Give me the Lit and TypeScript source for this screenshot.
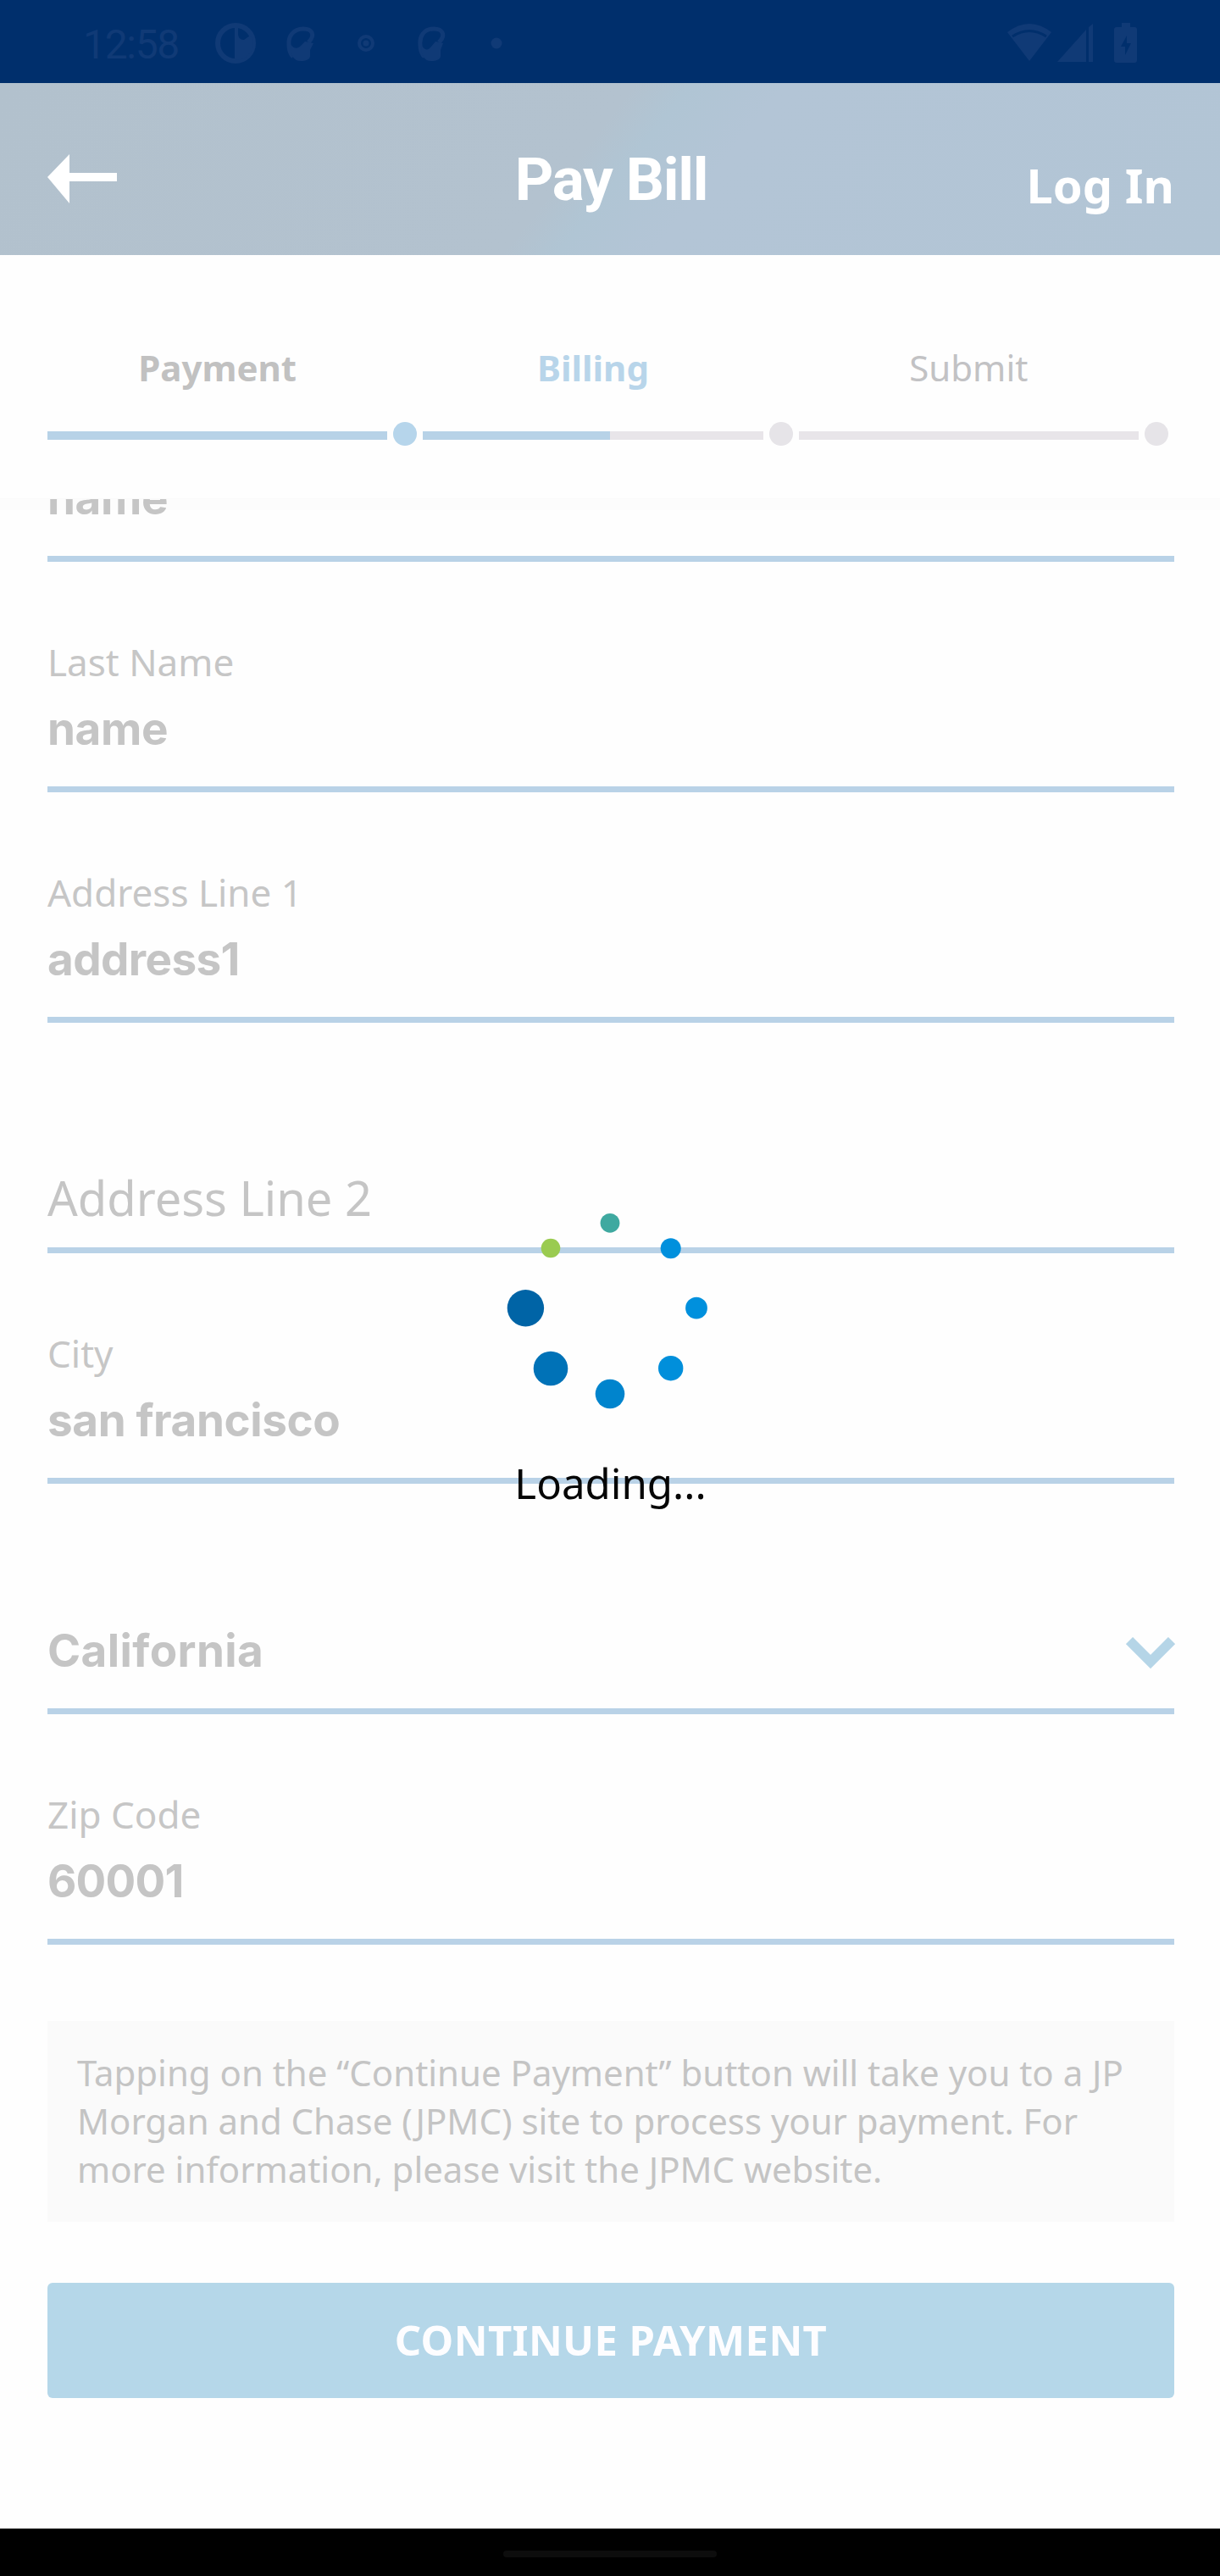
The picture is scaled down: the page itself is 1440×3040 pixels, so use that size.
import { LitElement, html, css, svg, nothing } from "lit";
import { customElement, property } from "lit/decorators.js";

interface Field {
  label?: string;
  value?: string;
  placeholder?: string;
  select?: boolean;
  kind: string;
}

const FIELDS: Field[] = [
  { value: "name", kind: "name" },
  { label: "Last Name", value: "name", kind: "name" },
  { label: "Address Line 1", value: "address1", kind: "address" },
  { placeholder: "Address Line 2", kind: "empty" },
  { label: "City", value: "san francisco", kind: "city" },
  { value: "California", select: true, kind: "state" },
  { label: "Zip Code", value: "60001", kind: "zip" },
];

// x, y, radius and colour of each spinner dot
const DOTS: [number, number, number, string][] = [
  [100.3, 21.3, 11.4, "#3fa9a0"],
  [172, 51.3, 12, "#0090dd"],
  [202.3, 121.7, 12.9, "#0090dd"],
  [172, 192.7, 14.7, "#008fdb"],
  [100.3, 223, 17.3, "#0084cd"],
  [30.3, 193, 20.3, "#0072b7"],
  [0.7, 121.7, 21.7, "#0064a6"],
  [30.3, 51, 11.3, "#9acb50"],
];

@customElement("status-bar")
export class StatusBar extends LitElement {
  static styles = css`
    :host { display: flex; height: 98px; background: #002f6c; color: #103a76; align-items: center; }
    .time { font: 400 48px/56px Roboto, sans-serif; padding-left: 98px; width: 142px; padding-top: 8px; letter-spacing: -1.3px; white-space: nowrap; }
    svg { display: block; height: 98px; fill: currentColor; }
    .left { width: 380px; }
    .right { width: 180px; margin-left: auto; margin-right: 80px; }
    .line { fill: none; stroke: currentColor; }
    .gap { fill: none; stroke: #002f6c; }
    .cut { fill: #002f6c; }
  `;
  render() {
    return html`
      <div class="time">12:58</div>
      <svg class="left" viewBox="240 0 380 98">
        <circle class="line" cx="278" cy="51" r="21" stroke-width="6" />
        <path d="M277 32h4v9q1 6 7 6l7-5q4 4 4 9c0 12-10 20-22 20z" />
        <path class="line" d="M364 50c9-9 4-16-6-16-12 0-18 9-17 19 0 6 2 11 5 14" stroke-width="5" />
        <path d="M343 52c4 6 8 6 12 2l5-5 10 2-4 8v7c0 4-5 6-11 6-9 0-12-7-12-20z" />
        <circle class="line" cx="432" cy="51" r="8" stroke-width="4" />
        <circle cx="432" cy="51" r="3.5" />
        <path class="line" d="M518 50c9-9 4-16-6-16-12 0-17 9-16 19 0 6 2 11 5 14" stroke-width="5" />
        <path d="M497 52c4 8 8 8 12 3l5-6 9 2-3 8v7c0 4-5 6-11 6-9 0-12-7-12-20z" />
        <circle cx="586" cy="51" r="6.5" />
      </svg>
      <svg class="right" viewBox="1180 0 180 98">
        <path d="M1189 38q26-20 52 0l-26 34z" />
        <path class="gap" d="M1195 43q20-13 40 0" stroke-width="3" />
        <path d="M1248 73l34-38v38zM1285 32l5-4v45h-5z" />
        <path d="M1324 27h10v5h5q3 0 3 3v36q0 3-3 3h-21q-3 0-3-3V35q0-3 3-3h6z" />
        <path class="cut" d="M1330 42l-7 13h5v10l7-14h-5z" />
      </svg>`;
  }
}

@customElement("step-progress")
export class StepProgress extends LitElement {
  static styles = css`
    :host { display: grid; grid-template-columns: repeat(3, 1fr); box-sizing: border-box; height: 287px; padding: 0 54px 0 56px; background: #fefefe; font-family: "Noto Sans", sans-serif; }
    .step { display: flex; flex-direction: column; }
    .name { margin-top: 103px; padding-right: 42px; font-size: 42px; line-height: 60px; text-align: center; color: #c2c2c4; }
    .strong { font-weight: 700; color: #c1c1c1; }
    .current { font-weight: 700; color: #b8d5ea; }
    .track { display: flex; align-items: center; gap: 7px; padding-right: 7px; margin-top: 34px; }
    .bar { flex: 1; height: 10px; margin-top: 3px; background: #e8e5e9; }
    .fill { height: 100%; background: #b7d2e7; }
    .dot { width: 28px; height: 28px; border-radius: 50%; background: #e6e4e8; }
    .done { background: #b6d5eb; }
  `;
  render() {
    const steps = [
      { name: "Payment", cls: "strong", fill: 100 },
      { name: "Billing", cls: "current", fill: 55 },
      { name: "Submit", cls: "", fill: 0 },
    ];
    return steps.map(
      (s) => html`<div class="step">
        <div class="name ${s.cls}">${s.name}</div>
        <div class="track">
          <div class="bar"><div class="fill" style="width:${s.fill}%"></div></div>
          <div class="dot ${s.fill === 100 ? "done" : ""}"></div>
        </div>
      </div>`
    );
  }
}

@customElement("form-field")
export class FormField extends LitElement {
  @property({ attribute: false }) field!: Field;
  static styles = css`
    :host { display: flex; flex-direction: column; justify-content: flex-end; box-sizing: border-box; height: 272px; border-bottom: 7px solid #b9d2e7; font-family: "Noto Sans", sans-serif; color: #c5c5c5; }
    .label { font-size: 44px; line-height: 60px; margin-bottom: 13px; color: #c6c6c6; }
    .row { display: flex; align-items: center; justify-content: space-between; height: 72px; margin-bottom: 32px; }
    .value { font: 700 53px/72px Inter, sans-serif; white-space: nowrap; }
    .placeholder { font-size: 56px; line-height: 78px; margin-bottom: 20px; }
    .name { letter-spacing: -0.4px; }
    .address { letter-spacing: -0.6px; }
    .city { letter-spacing: -0.4px; }
    .state { letter-spacing: 0.4px; }
    .zip { letter-spacing: -0.8px; }
    svg { display: block; width: 58px; height: 38px; margin-right: -1px; margin-top: 6px; }
  `;
  render() {
    const f = this.field;
    if (f.placeholder) return html`<div class="placeholder">${f.placeholder}</div>`;
    return html`
      ${f.label ? html`<div class="label">${f.label}</div>` : nothing}
      <div class="row">
        <div class="value ${f.kind}">${f.value}</div>
        ${f.select
          ? html`<svg viewBox="0 0 58 38"><path d="M4 4L29 29L54 4" fill="none" stroke="#b5d5e7" stroke-width="11.500" /></svg>`
          : nothing}
      </div>`;
  }
}

@customElement("loading-spinner")
export class LoadingSpinner extends LitElement {
  static styles = css`
    :host { display: flex; flex-direction: column; align-items: center; font-family: "Noto Sans", sans-serif; }
    svg { display: block; width: 250px; height: 250px; }
    .text { margin-top: 45px; font-size: 49.2px; line-height: 66px; color: #060606; padding-left: 1px; }
  `;
  render() {
    return html`
      <svg viewBox="-24.700 0 250 250">
        ${DOTS.map(([x, y, r, c]) => svg`<circle cx=${x} cy=${y} r=${r} fill=${c} />`)}
      </svg>
      <div class="text">Loading...</div>`;
  }
}

@customElement("app-root")
export class AppRoot extends LitElement {
  static styles = css`
    :host { display: flex; flex-direction: column; position: relative; width: 1440px; height: 3040px; overflow: hidden; background: #fefefe; font-family: "Noto Sans", sans-serif; }
    .header { display: grid; grid-template-columns: 1fr auto 1fr; height: 203px; color: #fff; background: linear-gradient(128deg, #b2c1cd 0%, #b3c2cf 47%, #b0c5d4 51%, #b3c5d6 58%, #b2c5d5 100%); }
    .back { width: 82px; height: 58px; margin: 84px 0 0 56px; fill: #fff; }
    .title { font: 700 71px/84px Roboto, sans-serif; margin-top: 72px; letter-spacing: -1.3px; padding-left: 3px; }
    .login { justify-self: end; margin: 82px 54px 0 0; font-size: 56px; line-height: 76px; font-weight: 700; }
    .body { display: flex; flex-direction: column; height: 2396px; overflow: hidden; padding: 0 54px 0 56px; border-top: 1px solid #fafafa; box-sizing: border-box; }
    .shade { height: 13px; margin: 0 -54px 0 -56px; background: #fcfcfc; flex: none; }
    .form { margin-top: -211px; display: flex; flex-direction: column; flex: none; }
    .info { margin-top: 90px; padding: 32px 35px 0; height: 237px; box-sizing: border-box; background: #fafafa; color: #c4c4c4; font-size: 41.95px; line-height: 57px; white-space: nowrap; flex: none; }
    .pay { margin-top: 72px; height: 136px; padding-bottom: 2px; box-sizing: border-box; border-radius: 6px; display: flex; align-items: center; justify-content: center; background: #b5d7e9; color: #fdfdff; font-size: 49px; letter-spacing: 0.35px; font-weight: 700; flex: none; }
    .nav { height: 56px; background: #000; display: flex; justify-content: center; padding-top: 26px; box-sizing: border-box; }
    .pill { width: 252px; height: 8px; border-radius: 4px; background: #0d0d0d; }
    .overlay { position: absolute; left: 0; right: 0; top: 1422px; }
  `;
  render() {
    return html`
      <status-bar></status-bar>
      <div class="header">
        <svg class="back" viewBox="0 0 82 58"><path d="M0 27L26 0V22H82V32H26V58Z" /></svg>
        <div class="title">Pay Bill</div>
        <div class="login">Log In</div>
      </div>
      <step-progress></step-progress>
      <div class="body">
        <div class="shade"></div>
        <div class="form">${FIELDS.map((f) => html`<form-field .field=${f}></form-field>`)}</div>
        <div class="info">Tapping on the “Continue Payment” button will take you to a JP<br />Morgan and Chase (JPMC) site to process your payment. For<br />more information, please visit the JPMC website.</div>
        <div class="pay">CONTINUE PAYMENT</div>
      </div>
      <div class="nav"><div class="pill"></div></div>
      <div class="overlay"><loading-spinner></loading-spinner></div>`;
  }
}
